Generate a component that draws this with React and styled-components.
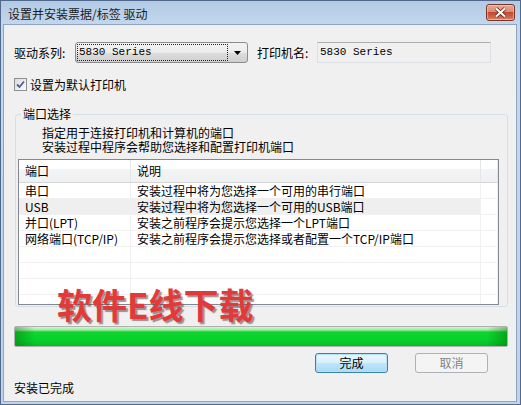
import React from 'react';
import styled, { createGlobalStyle } from 'styled-components';

const GlobalStyle = createGlobalStyle`
  html, body {
    margin: 0;
    padding: 0;
  }
  body {
    font-family: "Noto Sans CJK SC", "Liberation Sans", sans-serif;
    font-size: 12px;
    color: #000;
  }
`;

const Window = styled.div`
  position: relative;
  width: 521px;
  height: 405px;
  box-sizing: border-box;
  border: 1px solid #51698c;
  background: linear-gradient(#b3cae5, #c3d7ed 24px, #bfd3ea);
  display: flex;
  flex-direction: column;
  overflow: hidden;
`;

const TitleBar = styled.div`
  height: 23px;
  display: flex;
  align-items: flex-start;
  padding: 0 5px 0 7px;
  box-sizing: border-box;
`;

const TitleText = styled.span`
  line-height: 14px;
  margin-top: 6px;
  color: #1b1b1b;
`;

const CloseButton = styled.div`
  margin-left: auto;
  margin-top: 3px;
  width: 29px;
  height: 17px;
  box-sizing: border-box;
  border: 1px solid #7b3426;
  border-radius: 3px;
  background: linear-gradient(#e9a898, #d98a76 45%, #c24a32 50%, #d06a52 85%, #e49a83);
  display: flex;
  align-items: center;
  justify-content: center;
  box-shadow: inset 0 0 0 1px rgba(255, 220, 210, 0.45);
`;

const Client = styled.div`
  flex: 1;
  margin: 0 3px 2px 2px;
  border: 1px solid #8fa4bf;
  background: #f0f0f0;
  display: flex;
  flex-direction: column;
  padding: 17px 0 0 10px;
`;

const Row = styled.div`
  display: flex;
  align-items: center;
`;

const Label = styled.span`
  width: ${(p) => p.$w}px;
  line-height: 14px;
  flex-shrink: 0;
`;

const Combo = styled.div`
  width: 173px;
  height: 21px;
  box-sizing: border-box;
  border: 1px solid #8b8c8e;
  border-radius: 3px;
  background: linear-gradient(#f3f3f3, #ebebeb 50%, #dddddd 51%, #cfcfcf);
  display: flex;
  align-items: center;
  padding: 0 0 0 1px;
  margin-right: 9px;
`;

const ComboValue = styled.div`
  flex: 1;
  height: 15px;
  border: 1px dotted #222;
  font-family: "Liberation Mono", monospace;
  font-size: 11px;
  line-height: 15px;
  padding-left: 1px;
`;

const ComboArrow = styled.div`
  width: 19px;
  display: flex;
  justify-content: center;
`;

const TextBox = styled.div`
  width: 174px;
  height: 21px;
  box-sizing: border-box;
  border: 1px solid #dcdfe3;
  border-top-color: #abadb3;
  background: #f0f0f0;
  font-family: "Liberation Mono", monospace;
  font-size: 11px;
  line-height: 19px;
  padding-left: 2px;
`;

const CheckRow = styled.div`
  display: flex;
  align-items: center;
  margin-top: 15px;
  height: 13px;
`;

const CheckBox = styled.div`
  width: 13px;
  height: 13px;
  box-sizing: border-box;
  border: 1px solid #8e8f8f;
  background: linear-gradient(135deg, #dcdcdc, #fafafa);
  display: flex;
  align-items: center;
  justify-content: center;
  margin-right: 3px;
`;

const Group = styled.fieldset`
  margin: 16px 8px 0 1px;
  padding: 0 8px 1px 2px;
  border: 1px solid #d5dfe5;
  border-radius: 3px;
  min-width: 0;
`;

const GroupTitle = styled.legend`
  padding: 0 2px;
  margin-left: 3px;
  line-height: 14px;
`;

const Desc = styled.div`
  margin: 5px 0 5px 24px;
  line-height: 14px;
`;

const List = styled.div`
  height: 146px;
  box-sizing: border-box;
  border: 1px solid #828790;
  background: #fff;
  overflow: hidden;
`;

const Grid = styled.div`
  display: grid;
  grid-template-columns: 112px 350px 1fr;
`;

const HeadCell = styled.div`
  height: 23px;
  box-sizing: border-box;
  border-right: 1px solid #e3e5e8;
  border-bottom: 1px solid #d5d5d5;
  background: linear-gradient(#ffffff, #ffffff 40%, #f3f4f6 41%, #eef0f2);
  line-height: 22px;
  padding-left: 6px;
`;

const Cell = styled.div`
  height: 16px;
  box-sizing: border-box;
  border-right: 1px solid #f0f0f0;
  border-bottom: 1px solid #f0f0f0;
  background: ${(p) => (p.$shade ? '#efefef' : '#fff')};
  line-height: 15px;
  padding-left: 6px;
  white-space: nowrap;
  overflow: hidden;
`;

const Progress = styled.div`
  margin: 19px 8px 0 0;
  height: 21px;
  box-sizing: border-box;
  border: 1px solid #b0b0b0;
  border-radius: 2px;
  background: linear-gradient(
      90deg,
      rgba(0, 80, 0, 0.35),
      rgba(0, 80, 0, 0) 20px,
      rgba(0, 80, 0, 0) calc(100% - 20px),
      rgba(0, 80, 0, 0.35)
    ),
    linear-gradient(#d2f7d2, #9eea9e 3px, #0fd530 5px, #06d02a 70%, #07bb28);
`;

const ButtonRow = styled.div`
  display: flex;
  justify-content: flex-end;
  gap: 27px;
  margin: 6px 28px 0 0;
`;

const Button = styled.div`
  width: 73px;
  height: 20px;
  box-sizing: border-box;
  border: 1px solid ${(p) => (p.$disabled ? '#adb2b5' : '#3c7fb1')};
  border-radius: 3px;
  background: ${(p) =>
    p.$disabled
      ? '#f4f4f4'
      : 'linear-gradient(#eaf6fd, #d9f0fc 50%, #bee6fd 51%, #a7d9f5)'};
  box-shadow: ${(p) => (p.$disabled ? 'none' : 'inset 0 0 0 1px #b6e0f6')};
  color: ${(p) => (p.$disabled ? '#838383' : '#000')};
  display: flex;
  align-items: center;
  justify-content: center;
  line-height: 14px;
`;

const Status = styled.div`
  margin-top: 8px;
  line-height: 14px;
`;

const Watermark = styled.div`
  position: absolute;
  left: 56px;
  top: 283px;
  font-size: 35px;
  font-weight: 700;
  line-height: 40px;
  color: #e2393b;
  text-shadow: 2px 2px 1px rgba(90, 60, 60, 0.55);
  white-space: nowrap;
`;

const ports = [
  ['串口', '安装过程中将为您选择一个可用的串行端口'],
  ['USB', '安装过程中将为您选择一个可用的USB端口'],
  ['并口(LPT)', '安装之前程序会提示您选择一个LPT端口'],
  ['网络端口(TCP/IP)', '安装之前程序会提示您选择或者配置一个TCP/IP端口'],
  ['', ''],
  ['', ''],
  ['', ''],
  ['', ''],
];

export default function App() {
  return (
    <>
      <GlobalStyle />
      <Window>
        <TitleBar>
          <TitleText>设置并安装票据/标签 驱动</TitleText>
          <CloseButton>
            <svg width="13" height="11" viewBox="0 0 13 11">
              <path
                d="M2 1.5 L6.5 5.5 L11 1.5 M2 9.5 L6.5 5.5 L11 9.5"
                stroke="#5a1a10"
                strokeWidth="3.6"
                fill="none"
              />
              <path
                d="M2 1.5 L6.5 5.5 L11 1.5 M2 9.5 L6.5 5.5 L11 9.5"
                stroke="#fff"
                strokeWidth="2.2"
                fill="none"
              />
            </svg>
          </CloseButton>
        </TitleBar>
        <Client>
          <Row>
            <Label $w={61}>驱动系列:</Label>
            <Combo>
              <ComboValue>5830 Series</ComboValue>
              <ComboArrow>
                <svg width="7" height="4" viewBox="0 0 7 4">
                  <polygon points="0,0 7,0 3.5,4" fill="#000" />
                </svg>
              </ComboArrow>
            </Combo>
            <Label $w={60}>打印机名:</Label>
            <TextBox>5830 Series</TextBox>
          </Row>
          <CheckRow>
            <CheckBox>
              <svg width="9" height="9" viewBox="0 0 9 9">
                <path d="M1 4.5 L3.5 7 L8 1.5" stroke="#4a5f97" strokeWidth="1.8" fill="none" />
              </svg>
            </CheckBox>
            <Label>设置为默认打印机</Label>
          </CheckRow>
          <Group>
            <GroupTitle>端口选择</GroupTitle>
            <Desc>
              指定用于连接打印机和计算机的端口
              <br />
              安装过程中程序会帮助您选择和配置打印机端口
            </Desc>
            <List>
              <Grid>
                <HeadCell>端口</HeadCell>
                <HeadCell>说明</HeadCell>
                <HeadCell />
                {ports.map(([port, desc], i) => (
                  <React.Fragment key={i}>
                    <Cell $shade={i === 1}>{port}</Cell>
                    <Cell $shade={i === 1}>{desc}</Cell>
                    <Cell />
                  </React.Fragment>
                ))}
              </Grid>
            </List>
          </Group>
          <Progress />
          <ButtonRow>
            <Button>完成</Button>
            <Button $disabled>取消</Button>
          </ButtonRow>
          <Status>安装已完成</Status>
        </Client>
        <Watermark>软件E线下载</Watermark>
      </Window>
    </>
  );
}
